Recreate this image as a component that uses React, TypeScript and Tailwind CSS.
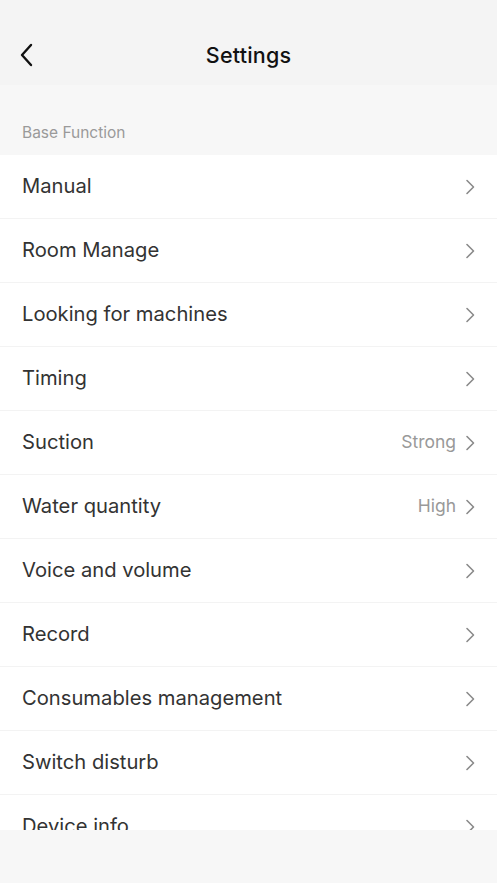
const rows: { label: string; value?: string }[] = [
  { label: "Manual" },
  { label: "Room Manage" },
  { label: "Looking for machines" },
  { label: "Timing" },
  { label: "Suction", value: "Strong" },
  { label: "Water quantity", value: "High" },
  { label: "Voice and volume" },
  { label: "Record" },
  { label: "Consumables management" },
  { label: "Switch disturb" },
  { label: "Device info" },
];

function Chevron() {
  return (
    <svg width="10" height="16" viewBox="0 0 10 16" fill="none" className="shrink-0">
      <polyline points="2,1.5 8.5,8 2,14.5" stroke="#8a8a8a" strokeWidth="1.6" strokeLinecap="round" strokeLinejoin="round" />
    </svg>
  );
}

export default function App() {
  return (
    <div className="flex h-[883px] w-[497px] flex-col bg-[#f7f7f7] font-['Inter',sans-serif] overflow-hidden">
      {/* Header */}
      <div className="relative flex h-[85px] shrink-0 items-center justify-center bg-[#f4f4f4] pt-[26px]">
        <button className="absolute left-[18px] top-[43px]">
          <svg width="18" height="24" viewBox="0 0 18 24" fill="none">
            <polyline points="13,2 4,12 13,22" stroke="#111" strokeWidth="2.4" strokeLinecap="round" strokeLinejoin="round" />
          </svg>
        </button>
        <h1 className="text-[21.5px] font-medium tracking-[0.2px] text-[#111]">Settings</h1>
      </div>

      {/* List */}
      <div className="h-[745px] shrink-0 overflow-hidden">
        <div className="px-[22px] pt-[38px] pb-[12px] text-[15.5px] leading-[20px] text-[#9a9a9a]">Base Function</div>
        <div className="bg-white">
          {rows.map((r) => (
            <div key={r.label} className="flex h-[64px] items-center justify-between border-b border-[#f3f3f3] pl-[22px] pr-[22px]">
              <span className="text-[20.2px] text-[#333]">{r.label}</span>
              <div className="flex items-center gap-[9px]">
                {r.value && <span className="text-[17.5px] text-[#999]">{r.value}</span>}
                <Chevron />
              </div>
            </div>
          ))}
        </div>
      </div>

      <div className="flex-1 bg-[#f7f7f7]" />
    </div>
  );
}
